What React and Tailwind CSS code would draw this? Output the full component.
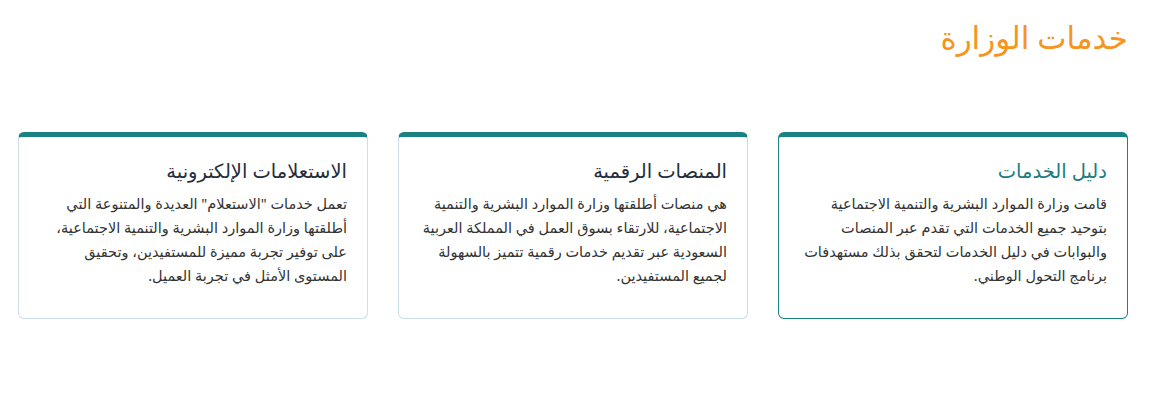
import React from "react";

const services = [
  {
    title: "دليل الخدمات",
    text: "قامت وزارة الموارد البشرية والتنمية الاجتماعية بتوحيد جميع الخدمات التي تقدم عبر المنصات والبوابات في دليل الخدمات لتحقق بذلك مستهدفات برنامج التحول الوطني.",
    active: true,
  },
  {
    title: "المنصات الرقمية",
    text: "هي منصات أطلقتها وزارة الموارد البشرية والتنمية الاجتماعية، للارتقاء بسوق العمل في المملكة العربية السعودية عبر تقديم خدمات رقمية تتميز بالسهولة لجميع المستفيدين.",
  },
  {
    title: "الاستعلامات الإلكترونية",
    text: 'تعمل خدمات "الاستعلام" العديدة والمتنوعة التي أطلقتها وزارة الموارد البشرية والتنمية الاجتماعية، على توفير تجربة مميزة للمستفيدين، وتحقيق المستوى الأمثل في تجربة العميل.',
  },
];

const App = () => {
  return (
    <div
      dir="rtl"
      className="bg-white min-h-[400px] font-['Noto_Sans','DejaVu_Sans',sans-serif]"
    >
      <div className="w-[1110px] mr-[45px] pt-[17px]">
        {/* HEADER */}
        <h2 className="text-[31px] leading-[40px] text-[#f7941d] font-medium">
          خدمات الوزارة
        </h2>

        {/* CARDS */}
        <div className="grid grid-cols-3 gap-[30px] mt-[75px]">
          {services.map((s) => (
            <div
              key={s.title}
              className={
                s.active
                  ? "h-[187px] rounded-[6px] border border-t-[5px] border-[#1b8283] bg-white px-[20px] pt-[20px]"
                  : "h-[187px] rounded-[6px] border border-t-[5px] border-[#c9e0e5] border-t-[#1b8283] bg-white px-[20px] pt-[20px]"
              }
            >
              <h3
                className={
                  s.active
                    ? "text-[19.5px] leading-[28px] font-medium text-[#1b7d80]"
                    : "text-[19.5px] leading-[28px] font-medium text-[#1f2d3d]"
                }
              >
                {s.title}
              </h3>
              <p className="mt-[6px] text-[14.5px] leading-[24px] text-[#333]">
                {s.text}
              </p>
            </div>
          ))}
        </div>
      </div>
    </div>
  );
};

export default App;
